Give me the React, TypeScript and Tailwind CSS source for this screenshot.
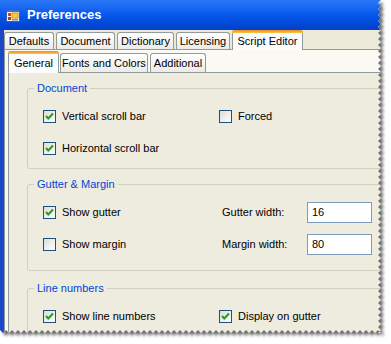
import React from 'react'

function TitleIcon() {
  return (
    <svg width="14" height="13" viewBox="0 0 14 13" className="shrink-0">
      <rect x="0.5" y="0.5" width="13" height="12" fill="#F4F4F0" stroke="#3060B8" />
      <rect x="1" y="1" width="12" height="2" fill="#3A6FD8" />
      <rect x="2" y="4" width="3" height="3" fill="#E04020" />
      <rect x="2" y="8" width="3" height="3" fill="#C83018" />
      <rect x="6" y="4" width="6" height="5" fill="#F8D030" stroke="#D08010" strokeWidth="0.8" />
      <rect x="6" y="10" width="6" height="1.5" fill="#8090A8" />
    </svg>
  )
}

function Check({ checked, label }: { checked: boolean; label: string }) {
  return (
    <div className="flex items-center h-[21px]">
      <span className="w-[13px] h-[13px] border border-[#1C5180] bg-gradient-to-br from-[#DCDCD7] to-white flex items-center justify-center shrink-0">
        {checked && (
          <svg width="11" height="11" viewBox="0 0 11 11">
            <path d="M2 5 L4.3 7.5 L9 2.5" stroke="#21A121" strokeWidth="2.2" fill="none" />
          </svg>
        )}
      </span>
      <span className="ml-[6px] text-black whitespace-nowrap">{label}</span>
    </div>
  )
}

function Group({ title, className, children }: { title: string; className: string; children?: React.ReactNode }) {
  return (
    <div className={`relative shrink-0 w-[420px] border border-[#D0D0BF] rounded-[3px] pt-[17px] pl-[15px] ${className}`}>
      <span className="absolute -top-[8px] left-[6px] px-[3px] bg-[#EEEBDF] text-[#0046D5] leading-[14px] whitespace-nowrap">
        {title}
      </span>
      {children}
    </div>
  )
}

function NumBox({ value }: { value: string }) {
  return (
    <div className="w-[65px] h-[21px] border border-[#7F9DB9] bg-white pl-[4px] flex items-center">{value}</div>
  )
}

function TornEdge() {
  const xr = 381
  const yb = 333
  const pts: string[] = ['0,0']
  let i = 0
  for (let y = 0; y <= yb; y += 3, i++) pts.push(`${i % 2 ? xr - 3 : xr},${y}`)
  i = 0
  for (let x = xr; x >= 0; x -= 3, i++) pts.push(`${x},${i % 2 ? yb - 3 : yb}`)
  pts.push(`0,${yb}`)
  const poly = pts.join(' ')
  const outside = `M0 0 H391 V344 H0 Z M${poly.split(' ').join(' L')} Z`
  return (
    <svg width="391" height="344" className="absolute left-0 top-0 pointer-events-none">
      <defs>
        <clipPath id="outside">
          <path d={outside} clipRule="evenodd" />
        </clipPath>
        <filter id="blur" x="-10%" y="-10%" width="120%" height="120%">
          <feGaussianBlur stdDeviation="1.6" />
        </filter>
      </defs>
      <g clipPath="url(#outside)">
        <rect width="391" height="344" fill="#fff" />
        <polygon points={poly} transform="translate(3 3)" fill="#6a6a6a" filter="url(#blur)" />
      </g>
    </svg>
  )
}

export default function App() {
  const outerTabs = [
    { label: 'Defaults', w: 'w-[50px]' },
    { label: 'Document', w: 'w-[59px]' },
    { label: 'Dictionary', w: 'w-[57px]' },
    { label: 'Licensing', w: 'w-[54px]' },
  ]

  return (
    <div className="relative w-[391px] h-[344px] overflow-hidden bg-white text-[11px] font-['Liberation_Sans',Arial,sans-serif]">
      <div className="w-[420px] h-[344px] flex flex-col">
        {/* title bar */}
        <div className="h-[30px] shrink-0 flex items-center pl-[6px] bg-gradient-to-b from-[#2A78F6] via-[#0657EC] to-[#0040C8]">
          <TitleIcon />
          <span className="ml-[7px] text-white font-bold text-[13px]">Preferences</span>
        </div>

        <div className="flex-1 min-h-0 bg-[#ECE9D8] border-l-4 border-[#1A48C8] flex flex-col">
          {/* outer tabs */}
          <div className="h-[19px] shrink-0 flex items-end">
            {outerTabs.map((t) => (
              <div
                key={t.label}
                className={`${t.w} h-[17px] mr-[2px] border border-b-0 border-[#919B9C] rounded-t-[3px] bg-gradient-to-b from-white to-[#ECEBE6] flex items-center justify-center`}
              >
                {t.label}
              </div>
            ))}
            <div className="relative z-10 w-[71px] h-[20px] -mb-[1px] border-x border-[#919B9C] rounded-t-[3px] bg-[#FCFCFE] flex flex-col">
              <div className="h-[3px] -mx-[1px] rounded-t-[3px] bg-gradient-to-b from-[#E68B2C] to-[#FFC73C]" />
              <div className="flex-1 flex items-center justify-center">Script Editor</div>
            </div>
          </div>

          {/* outer panel */}
          <div className="flex-1 min-h-0 border border-[#919B9C] bg-[#FAF9F4] pl-[3px] flex flex-col">
            <div className="h-[22px] shrink-0 flex items-end">
              <div className="relative z-10 w-[51px] h-[22px] -mb-[1px] border-x border-[#919B9C] rounded-t-[3px] bg-[#FCFCFE] flex flex-col">
                <div className="h-[3px] -mx-[1px] rounded-t-[3px] bg-gradient-to-b from-[#E68B2C] to-[#FFC73C]" />
                <div className="flex-1 flex items-center justify-center">General</div>
              </div>
              <div className="w-[88px] h-[19px] ml-[1px] mr-[2px] border border-b-0 border-[#919B9C] rounded-t-[3px] bg-gradient-to-b from-white to-[#ECEBE6] flex items-center justify-center">
                Fonts and Colors
              </div>
              <div className="w-[56px] h-[19px] border border-b-0 border-[#919B9C] rounded-t-[3px] bg-gradient-to-b from-white to-[#ECEBE6] flex items-center justify-center">
                Additional
              </div>
            </div>

            {/* inner panel */}
            <div className="flex-1 min-h-0 overflow-hidden border border-[#919B9C] bg-[#EEEBDF] pt-[15px] pl-[18px] flex flex-col">
              <Group title="Document" className="h-[81px]">
                <div className="flex">
                  <div className="w-[176px]">
                    <Check checked label="Vertical scroll bar" />
                  </div>
                  <Check checked={false} label="Forced" />
                </div>
                <div className="mt-[11px]">
                  <Check checked label="Horizontal scroll bar" />
                </div>
              </Group>

              <Group title="Gutter & Margin" className="h-[87px] mt-[15px]">
                <div className="flex items-center">
                  <div className="w-[179px]">
                    <Check checked label="Show gutter" />
                  </div>
                  <span className="w-[85px]">Gutter width:</span>
                  <NumBox value="16" />
                </div>
                <div className="flex items-center mt-[11px]">
                  <div className="w-[179px]">
                    <Check checked={false} label="Show margin" />
                  </div>
                  <span className="w-[85px]">Margin width:</span>
                  <NumBox value="80" />
                </div>
              </Group>

              <Group title="Line numbers" className="h-[80px] mt-[17px]">
                <div className="flex">
                  <div className="w-[176px]">
                    <Check checked label="Show line numbers" />
                  </div>
                  <Check checked label="Display on gutter" />
                </div>
              </Group>
            </div>
          </div>
        </div>
      </div>
      <TornEdge />
    </div>
  )
}
